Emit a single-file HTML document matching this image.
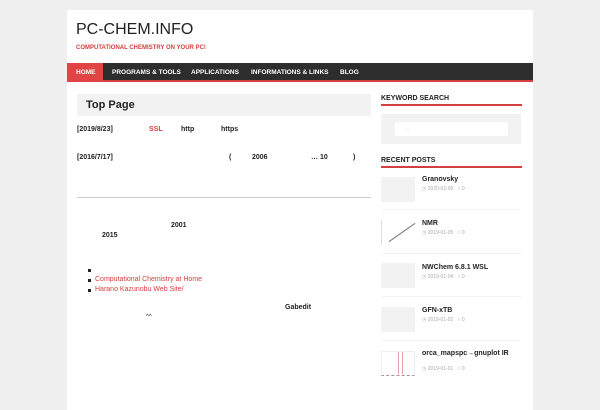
<!DOCTYPE html><html><head><meta charset="utf-8"><style>
*{margin:0;padding:0;box-sizing:border-box}
body{width:600px;height:400px;background:#efefef;font-family:"Liberation Sans","Noto Sans CJK JP",sans-serif;position:relative;overflow:hidden;color:#222}
.a{position:absolute;white-space:nowrap}
.b{font-weight:bold;font-size:7px}
.red{color:#d53f3f}
.thumb{position:absolute;left:381px;width:34px;height:25px;background:#f2f2f2}
.meta{font-size:5px;color:#aaa}
.sep{position:absolute;left:381px;width:140px;height:1px;background:#f3f3f3}
</style></head><body>
<div class="a" style="left:67px;top:10px;width:466px;height:400px;background:#fff"></div>
<div class="a" style="left:76px;top:21px;font-size:16px;color:#222">PC-CHEM.INFO</div>
<div class="a" style="left:76px;top:45px;font-size:6px;font-weight:bold;color:#d53f3f">COMPUTATIONAL CHEMISTRY ON YOUR PC!</div>
<div class="a" style="left:67px;top:63px;width:466px;height:19px;background:#2d2d2d;border-bottom:2px solid #d53f3f"></div>
<div class="a" style="left:67px;top:63px;width:36px;height:19px;background:#e04545"></div>
<div class="a" style="left:76px;top:69px;font-size:6.5px;font-weight:bold;color:#fff">HOME</div>
<div class="a" style="left:112px;top:69px;font-size:6.5px;font-weight:bold;color:#fff">PROGRAMS &amp; TOOLS</div>
<div class="a" style="left:191px;top:69px;font-size:6.5px;font-weight:bold;color:#fff">APPLICATIONS</div>
<div class="a" style="left:251px;top:69px;font-size:6.5px;font-weight:bold;color:#fff">INFORMATIONS &amp; LINKS</div>
<div class="a" style="left:340px;top:69px;font-size:6.5px;font-weight:bold;color:#fff">BLOG</div>
<div class="a" style="left:77px;top:94px;width:294px;height:22px;background:#f2f2f2"></div>
<div class="a" style="left:86px;top:99px;font-size:11px;font-weight:bold">Top Page</div>
<div class="a b" style="left:77px;top:126px">[2019/8/23]</div>
<div class="a b red" style="left:149px;top:126px">SSL</div>
<div class="a b" style="left:181px;top:126px">http</div>
<div class="a b" style="left:221px;top:126px">https</div>
<div class="a b" style="left:77px;top:154px">[2016/7/17]</div>
<div class="a b" style="left:229px;top:154px">(</div>
<div class="a b" style="left:252px;top:154px">2006</div>
<div class="a b" style="left:311px;top:154px">… 10</div>
<div class="a b" style="left:353px;top:154px">)</div>
<div class="a" style="left:77px;top:197px;width:294px;height:1px;background:#ccc"></div>
<div class="a b" style="left:171px;top:222px">2001</div>
<div class="a b" style="left:102px;top:232px">2015</div>
<div class="a" style="left:88px;top:269px;width:3px;height:3px;background:#222"></div>
<div class="a" style="left:88px;top:279px;width:3px;height:3px;background:#222"></div>
<div class="a b red" style="left:95px;top:276px;font-weight:normal">Computational Chemistry at Home</div>
<div class="a" style="left:88px;top:289px;width:3px;height:3px;background:#222"></div>
<div class="a b red" style="left:95px;top:286px;font-weight:normal">Harano Kazunobu Web Site/</div>
<div class="a b" style="left:285px;top:304px">Gabedit</div>
<div class="a" style="left:146px;top:314px;font-size:6px">^^</div>
<div class="a" style="left:381px;top:95px;font-size:7px;font-weight:bold">KEYWORD SEARCH</div>
<div class="a" style="left:381px;top:104px;width:141px;height:2px;background:#d53f3f"></div>
<div class="a" style="left:381px;top:114px;width:140px;height:30px;background:#f2f2f2"></div>
<div class="a" style="left:395px;top:122px;width:113px;height:14px;background:#fff"></div>
<div class="a" style="left:405px;top:126px;font-size:5px;color:#bbb">...</div>
<div class="a" style="left:381px;top:157px;font-size:7px;font-weight:bold">RECENT POSTS</div>
<div class="a" style="left:381px;top:166px;width:141px;height:2px;background:#d53f3f"></div>
<div class="thumb" style="top:177px"></div>
<div class="a b" style="left:422px;top:176px">Granovsky</div>
<div class="a meta" style="left:422px;top:186px">◷ 2020-02-05 &nbsp; ○ 0</div>
<div class="sep" style="top:209px"></div>
<div class="thumb" style="top:220px;background:#fff;border-left:1px solid #ddd"></div>
<div class="a" style="left:386px;top:232px;width:32px;height:1px;background:#777;transform:rotate(-35deg)"></div>
<div class="a b" style="left:422px;top:220px">NMR</div>
<div class="a meta" style="left:422px;top:230px">◷ 2019-01-05 &nbsp; ○ 0</div>
<div class="sep" style="top:253px"></div>
<div class="thumb" style="top:263px"></div>
<div class="a b" style="left:422px;top:264px">NWChem 6.8.1 WSL</div>
<div class="a meta" style="left:422px;top:274px">◷ 2019-01-04 &nbsp; ○ 0</div>
<div class="sep" style="top:296px"></div>
<div class="thumb" style="top:307px"></div>
<div class="a b" style="left:422px;top:307px">GFN-xTB</div>
<div class="a meta" style="left:422px;top:317px">◷ 2019-01-02 &nbsp; ○ 0</div>
<div class="sep" style="top:340px"></div>
<div class="thumb" style="top:351px;background:#fff;border:1px solid #eee;border-bottom:1px dashed #999"></div>
<div class="a" style="left:398px;top:352px;width:1px;height:22px;background:#e8a0a0"></div>
<div class="a" style="left:402px;top:352px;width:1px;height:22px;background:#e8a0a0"></div>
<div class="a b" style="left:422px;top:350px">orca_mapspc→gnuplot IR</div>
<div class="a meta" style="left:422px;top:366px">◷ 2019-01-01 &nbsp; ○ 0</div>
</body></html>
